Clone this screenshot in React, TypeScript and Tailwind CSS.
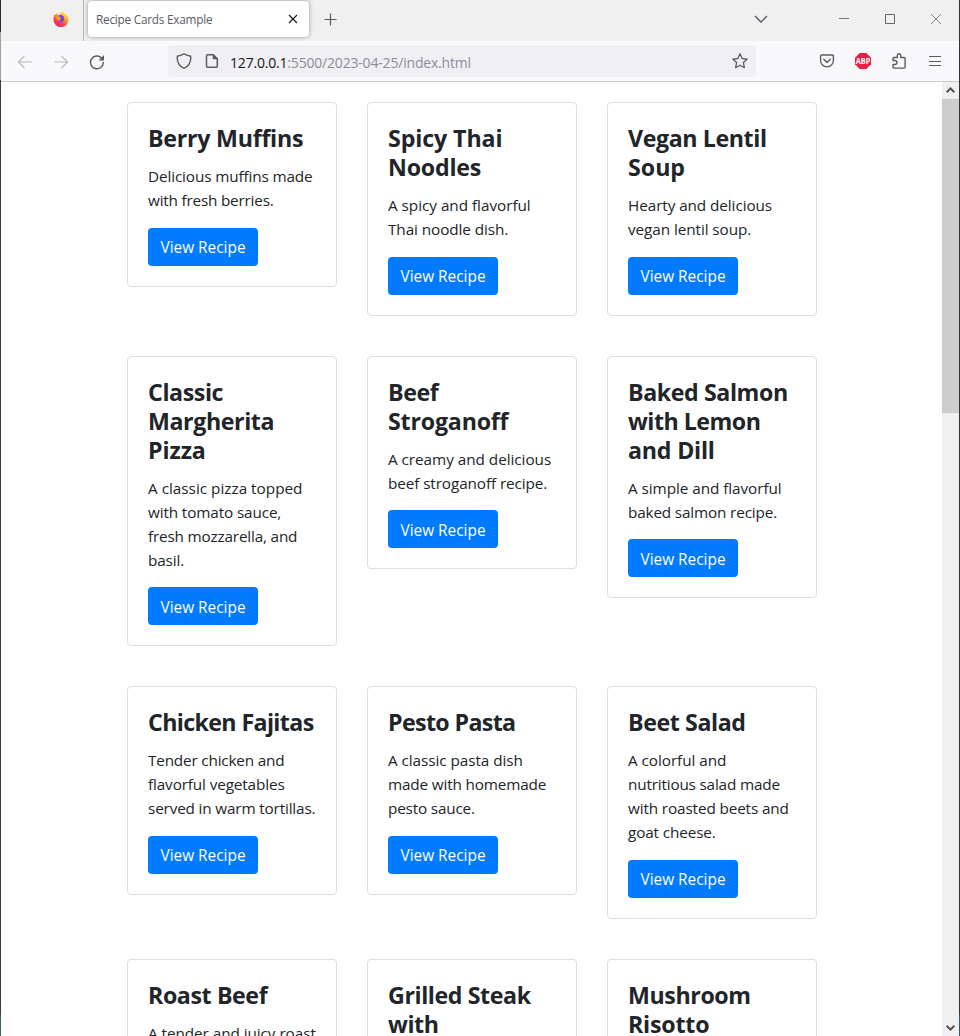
import React from "react";

type Line = { text: string; ls: string };
type Recipe = { title: Line[]; body: Line[] };

const h = (text: string, ls = "tracking-[-0.4px]"): Line => ({ text, ls });
const t = (text: string, ls = "tracking-[-0.13px]"): Line => ({ text, ls });

const rows: Recipe[][] = [
  [
    {
      title: [h("Berry Muffins", "tracking-[-0.25px]")],
      body: [t("Delicious muffins made"), t("with fresh berries.", "tracking-[-0.2px]")],
    },
    {
      title: [h("Spicy Thai", "tracking-[-0.1px]"), h("Noodles", "tracking-[-0.2px]")],
      body: [t("A spicy and flavorful", "tracking-[-0.03px]"), t("Thai noodle dish.", "tracking-[-0.08px]")],
    },
    {
      title: [h("Vegan Lentil"), h("Soup", "tracking-normal")],
      body: [t("Hearty and delicious", "tracking-[-0.08px]"), t("vegan lentil soup.", "tracking-[-0.08px]")],
    },
  ],
  [
    {
      title: [h("Classic"), h("Margherita"), h("Pizza", "tracking-[-0.1px]")],
      body: [
        t("A classic pizza topped", "tracking-normal"),
        t("with tomato sauce,"),
        t("fresh mozzarella, and", "tracking-[-0.18px]"),
        t("basil."),
      ],
    },
    {
      title: [h("Beef"), h("Stroganoff", "tracking-[-0.2px]")],
      body: [t("A creamy and delicious", "tracking-[-0.04px]"), t("beef stroganoff recipe.", "tracking-[-0.1px]")],
    },
    {
      title: [h("Baked Salmon"), h("with Lemon", "tracking-[-0.5px]"), h("and Dill", "tracking-[-0.2px]")],
      body: [t("A simple and flavorful", "tracking-[-0.06px]"), t("baked salmon recipe.", "tracking-[-0.16px]")],
    },
  ],
  [
    {
      title: [h("Chicken Fajitas", "tracking-[-0.62px]")],
      body: [t("Tender chicken and", "tracking-[-0.18px]"), t("flavorful vegetables"), t("served in warm tortillas.", "tracking-[-0.16px]")],
    },
    {
      title: [h("Pesto Pasta", "tracking-[-0.63px]")],
      body: [t("A classic pasta dish", "tracking-[-0.06px]"), t("made with homemade", "tracking-[-0.16px]"), t("pesto sauce.", "tracking-[-0.18px]")],
    },
    {
      title: [h("Beet Salad")],
      body: [
        t("A colorful and", "tracking-[-0.06px]"),
        t("nutritious salad made", "tracking-[-0.18px]"),
        t("with roasted beets and"),
        t("goat cheese."),
      ],
    },
  ],
  [
    { title: [h("Roast Beef")], body: [t("A tender and juicy roast", "tracking-[-0.06px]")] },
    { title: [h("Grilled Steak"), h("with")], body: [] },
    { title: [h("Mushroom"), h("Risotto", "tracking-[-0.2px]")], body: [] },
  ],
];

function Card({ recipe }: { recipe: Recipe }) {
  return (
    <article className="w-[210px] shrink-0 rounded-[4px] border border-[#dfdfdf] bg-white p-5 text-[#212529]">
      <h2 className="mb-[11px] pt-px text-[23.2px] font-bold leading-[29px]">
        {recipe.title.map((l) => (
          <span key={l.text} className={`block whitespace-nowrap ${l.ls}`}>{l.text}</span>
        ))}
      </h2>
      <p className="mb-[15.6px] text-[15.3px] leading-6">
        {recipe.body.map((l) => (
          <span key={l.text} className={`block whitespace-nowrap ${l.ls}`}>{l.text}</span>
        ))}
      </p>
      <button className="flex h-[38px] w-[110px] items-center justify-center rounded-[4px] bg-[#007bff] pt-[2px] text-[15.4px] whitespace-nowrap text-white">
        View Recipe
      </button>
    </article>
  );
}

function Firefox() {
  return (
    <svg width="16" height="16" viewBox="0 0 16 16">
      <defs>
        <linearGradient id="fx" x1="0.8" y1="0.05" x2="0.25" y2="1">
          <stop offset="0" stopColor="#fff44f" />
          <stop offset="0.35" stopColor="#ffa72a" />
          <stop offset="0.65" stopColor="#ff4a3c" />
          <stop offset="1" stopColor="#e6127f" />
        </linearGradient>
      </defs>
      <path d="M9.5 0.2c1.2 1 1.8 1.8 2.4 3 .4.2.9.4 1.1.1 1.600 1.100 2.600 3.200 2.600 5.200a7.500 7.500 0 0 1-15.200.1c0-2.400.5-4.100 1.500-5.700l.3 1.100c.3-.8.9-1.600 1.600-2.100l.2 1.700c.8-.1 1.600 0 2.300.3C7.100 2.200 8.400 1.700 9.500.2z" fill="url(#fx)" />
      <path d="M5.500 4.500c1.500-1.200 5.700-.4 5.700 3a3.600 3.600 0 0 1-7.100.9c1 .9 2.800.8 3.700 0 .6-.5.500-1.100 0-1.300-.9-.3-1.500-1.500-2.300-2.600z" fill="#7542e5" />
      <path d="M3 5.500c1.500-.5 2.700-.1 3.200.8.700.2 1.800.2 1.600.9-.3.700-1.500.8-1.500 1.300 0 .6.7 1 1.600 1-1.700 1-3.800-.1-4.400-1.700z" fill="#ff9a28" />
    </svg>
  );
}

function TabBar() {
  return (
    <div className="flex h-[41px] shrink-0 bg-[#f0f0f0]">
      <div className="flex w-[83px] items-center border-r border-[#b5b5b5] pl-[52px] pb-1">
        <Firefox />
      </div>
      <div className="mt-px ml-[4px] flex h-9 w-[221px] items-center justify-between rounded-[4px] bg-white pr-[11px] pl-[8px] shadow-[0_0_4px_rgba(0,0,0,0.4)]">
        <span className="pt-px text-[11.8px] tracking-[-0.24px] text-[#5b5b66]">Recipe Cards Example</span>
        <svg width="10" height="10" viewBox="0 0 10 10" stroke="#15141a" strokeWidth="1.1" fill="none">
          <path d="M1 1l8 8M9 1L1 9" />
        </svg>
      </div>
      <svg className="mt-[13px] ml-[15px]" width="13" height="13" viewBox="0 0 13 13" stroke="#5b5b66" strokeWidth="1.2" fill="none">
        <path d="M6.500 .5v12M.5 6.500h12" />
      </svg>
      <div className="ml-auto flex h-[38px] items-center pr-[18px]">
        <svg className="mr-[71px]" width="14" height="8" viewBox="0 0 14 8" stroke="#5b5b66" strokeWidth="1.4" fill="none">
          <path d="M1 1l6 6 6-6" />
        </svg>
        <svg className="mr-[35px]" width="11" height="11" viewBox="0 0 11 11" shapeRendering="crispEdges">
          <path d="M0 4h10v1H0z" fill="#777" />
        </svg>
        <svg className="mr-[36px]" width="10" height="10" viewBox="0 0 10 10" stroke="#666" fill="none">
          <path d="M.5 .5h9v9h-9z" />
        </svg>
        <svg width="10" height="10" viewBox="0 0 10 10" stroke="#777" strokeWidth="0.9" fill="none">
          <path d="M0 0l10 10M10 0L0 10" />
        </svg>
      </div>
    </div>
  );
}

function Toolbar() {
  return (
    <div className="flex h-[41px] shrink-0 items-center border-b border-[#cccccd] bg-[#f9f9fb]">
      <svg className="mt-[2px] ml-[16px]" width="15" height="14" viewBox="0 0 15 14" stroke="#bbbbc0" strokeWidth="1.2" fill="none" strokeLinecap="round" strokeLinejoin="round">
        <path d="M14.500 7H1.500M7 1.500L1.500 7 7 12.500" />
      </svg>
      <svg className="mt-[2px] ml-[21px]" width="15" height="14" viewBox="0 0 15 14" stroke="#bbbbc0" strokeWidth="1.2" fill="none" strokeLinecap="round" strokeLinejoin="round">
        <path d="M1.500 7h13M9 1.500L14.500 7 9 12.500" />
      </svg>
      <svg className="mt-[2px] ml-[21px]" width="16" height="16" viewBox="0 0 16 16" stroke="#5b5b66" strokeWidth="1.5" fill="none">
        <path d="M14.300 8.500A6.400 6.400 0 1 1 12.500 3.900" strokeLinecap="round" />
        <path d="M15 1v5.500H9.500z" fill="#5b5b66" stroke="none" />
      </svg>
      <div className="ml-[63px] flex h-8 w-[588px] items-center rounded-[4px] bg-[#f0f0f4] pl-[8px] pr-[8px]">
        <svg width="16" height="16" viewBox="0 0 16 16" stroke="#5b5b66" strokeWidth="1.4" fill="none" strokeLinejoin="round">
          <path d="M8 .7C6.300 2 4 2.700 1.300 3.200c-.4 4.800 1.300 9.800 6.700 12.100 5.400-2.300 7.100-7.300 6.700-12.100C12 2.700 9.700 2 8 .7z" />
        </svg>
        <svg className="ml-[12px]" width="16" height="16" viewBox="0 0 16 16" stroke="#5b5b66" strokeWidth="1.5" fill="none" strokeLinejoin="round">
          <path d="M3.500 1.700h5.800l4 4v7.600a1 1 0 0 1-1 1H3.500a1 1 0 0 1-1-1V2.700a1 1 0 0 1 1-1z" />
          <path d="M9 1.500v4.600h4.600z" fill="#5b5b66" strokeWidth="0.5" />
        </svg>
        <span className="mt-[2px] ml-[10px] text-[14px] tracking-[-0.19px] text-[#8d8d98]">
          <span className="text-[#15141a]">127.0.0.1</span>:5500/2023-04-25/index.html
        </span>
        <svg className="ml-auto" width="16" height="16" viewBox="0 0 16 16" stroke="#5b5b66" strokeWidth="1.3" fill="none" strokeLinejoin="round">
          <path d="M8 .8l2.100 4.700 5.100.6-3.800 3.500 1 5.100L8 12.200l-4.400 2.500 1-5.100L.8 6.100l5.100-.6z" />
        </svg>
      </div>
      <svg className="ml-[63px]" width="16" height="16" viewBox="0 0 16 16" stroke="#5b5b66" strokeWidth="1.4" fill="none" strokeLinecap="round" strokeLinejoin="round">
        <path d="M2.800 2h10.400a1.200 1.200 0 0 1 1.200 1.200V7.500a6.400 6.400 0 0 1-12.800 0V3.200A1.200 1.200 0 0 1 2.800 2z" />
        <path d="M4.800 6.300L8 9.400l3.200-3.100" />
      </svg>
      <svg className="ml-[20px]" width="16" height="16" viewBox="0 0 16 16">
        <path d="M4.700 0h6.600L16 4.700v6.600L11.300 16H4.700L0 11.300V4.700z" fill="#ed1e45" />
        <text x="8" y="11" textAnchor="middle" textLength="14.500" lengthAdjust="spacingAndGlyphs" fontSize="8.500" fontWeight="bold" fill="#fff">ABP</text>
      </svg>
      <svg className="ml-[20px]" width="16" height="16" viewBox="0 0 16 16" stroke="#5b5b66" strokeWidth="1.4" fill="none" strokeLinejoin="round">
        <path d="M2 7V5.500a1 1 0 0 1 1-1H6.300V2.500a1.700 1.700 0 0 1 3.400 0v2h3.400a1 1 0 0 1 1 1v8.600a1 1 0 0 1-1 1H3a1 1 0 0 1-1-1v-2.600h1.900a2 2 0 0 0 0-4H1.500" />
      </svg>
      <svg className="ml-[22px]" width="12" height="11" viewBox="0 0 12 11" shapeRendering="crispEdges">
        <path d="M0 0h12v1H0zM0 5h12v1H0zM0 9h12v1H0z" fill="#5b5b66" />
      </svg>
    </div>
  );
}

function Scrollbar() {
  return (
    <div className="flex w-[17px] shrink-0 flex-col items-center bg-[#f0f0f0]">
      <div className="flex h-[17px] items-center justify-center pb-px">
        <svg width="9" height="6" viewBox="0 0 9 6" stroke="#505050" strokeWidth="2" fill="none">
          <path d="M.7 5.200l3.800-3.800 3.800 3.800" />
        </svg>
      </div>
      <div className="h-[314px] w-full bg-[#cdcdcd]" />
      <div className="mt-auto flex h-[17px] items-center justify-center">
        <svg width="9" height="6" viewBox="0 0 9 6" stroke="#505050" strokeWidth="2" fill="none">
          <path d="M.7 .8l3.800 3.800L8.300 .8" />
        </svg>
      </div>
    </div>
  );
}

export default function App() {
  return (
    <div className="flex h-[1036px] w-[960px] overflow-hidden bg-white font-['Open_Sans','Noto_Sans',sans-serif]">
      <div className="flex w-px shrink-0 flex-col">
        <div className="h-8 bg-[#2b2b2b]" />
        <div className="h-12 bg-[#a0a0a0]" />
        <div className="flex-1 bg-[#3c3c3c]" />
        <div className="h-[21px] bg-[#2f6b58]" />
      </div>
      <div className="flex w-[958px] shrink-0 flex-col">
        <TabBar />
        <Toolbar />
        <div className="flex min-h-0 flex-1">
          <main className="flex min-w-0 flex-1 flex-col gap-10 overflow-hidden pt-5 pl-[126px]">
            {rows.map((row, i) => (
              <div key={i} className="flex shrink-0 items-start gap-[30px]">
                {row.map((r) => (
                  <Card key={r.title[0].text} recipe={r} />
                ))}
              </div>
            ))}
          </main>
          <Scrollbar />
        </div>
      </div>
      <div className="flex w-px shrink-0 flex-col">
        <div className="flex-1 bg-[#333333]" />
        <div className="h-[21px] bg-[#2c5a7c]" />
      </div>
    </div>
  );
}
